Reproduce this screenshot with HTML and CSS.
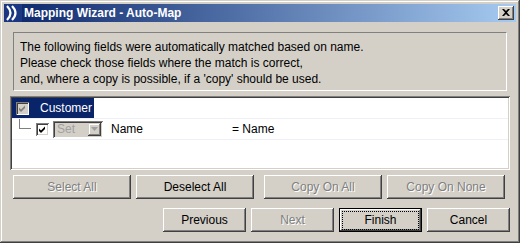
FILE: index.html
```html
<!DOCTYPE html>
<html lang="en">
<head>
    <meta charset="UTF-8">
    <meta name="viewport" content="width=device-width, initial-scale=1.0">
    <title>Mapping Wizard - Auto-Map</title>
    <link rel="stylesheet" href="styles.css">
</head>
<body>
    <div class="window">
        <div class="titlebar">
            <svg class="app-icon" width="18" height="18" viewBox="0 0 18 18">
                <rect width="18" height="18" fill="#1b3782"/>
                <path d="M3 2 Q10 9 3 16" stroke="#fff" stroke-width="2.2" fill="none"/>
                <path d="M8 2 Q15 9 8 16" stroke="#fff" stroke-width="2.2" fill="none"/>
            </svg>
            <span class="title">Mapping Wizard - Auto-Map</span>
            <div class="close-btn">
                <svg width="8" height="7" viewBox="0 0 8 7">
                    <path d="M0 0h2l2 2 2-2h2L5 3.5 8 7H6L4 5 2 7H0l3-3.5z" fill="#000"/>
                </svg>
            </div>
        </div>

        <div class="intro">
            The following fields were automatically matched based on name.<br>
            Please check those fields where the match is correct,<br>
            and, where a copy is possible, if a 'copy' should be used.
        </div>

        <div class="tree">
            <div class="row">
                <div class="node selected">
                    <span class="check disabled">
                        <svg width="9" height="9" viewBox="0 0 9 9"><path d="M1 3.5l2 2 4-4v2.5l-4 4-2-2z" fill="#808080"/></svg>
                    </span>
                    <span class="node-text">Customer</span>
                </div>
            </div>
            <div class="row">
                <span class="connector"></span>
                <span class="check">
                    <svg width="9" height="9" viewBox="0 0 9 9"><path d="M1 3.5l2 2 4-4v2.5l-4 4-2-2z" fill="#000"/></svg>
                </span>
                <div class="combo">
                    <span class="combo-text">Set</span>
                    <span class="combo-arrow">
                        <svg width="7" height="4" viewBox="0 0 7 4"><path d="M0 0h7L3.5 4z" fill="#a0a0a0"/></svg>
                    </span>
                </div>
                <span class="field-name">Name</span>
                <span class="field-match">= Name</span>
            </div>
        </div>

        <div class="actions">
            <button class="btn wide" disabled>Select All</button>
            <button class="btn wide">Deselect All</button>
            <button class="btn wide spaced" disabled>Copy On All</button>
            <button class="btn wide" disabled>Copy On None</button>
        </div>

        <div class="nav">
            <button class="btn">Previous</button>
            <button class="btn" disabled>Next</button>
            <button class="btn default"><span class="focus">Finish</span></button>
            <button class="btn">Cancel</button>
        </div>
    </div>
</body>
</html>
```

FILE: styles.css
```css
body {
    margin: 0;
    font-family: "Liberation Sans", Arial, sans-serif;
    font-size: 12px;
    color: #000;
}
.window {
    width: 520px;
    height: 243px;
    box-sizing: border-box;
    padding: 4px;
    background: #d4d0c8;
    box-shadow: inset -1px -1px #404040, inset 1px 1px #d4d0c8,
                inset -2px -2px #808080, inset 2px 2px #fff;
    display: flex;
    flex-direction: column;
}
.titlebar {
    height: 18px;
    display: flex;
    align-items: center;
    background: linear-gradient(to right, #0a246a, #a6caf0);
    color: #fff;
    font-weight: bold;
}
.app-icon {
    display: block;
}
.title {
    margin-left: 2px;
    line-height: 18px;
}
.close-btn {
    margin-left: auto;
    margin-right: 2px;
    width: 16px;
    height: 14px;
    box-sizing: border-box;
    background: #d4d0c8;
    box-shadow: inset -1px -1px #404040, inset 1px 1px #fff,
                inset -2px -2px #808080;
    display: flex;
    align-items: center;
    justify-content: center;
}
.close-btn svg {
    display: block;
    margin: 0 1px 1px 0;
}
.intro {
    margin: 10px 9px 0;
    padding: 6px 6px 3px;
    border: 1px solid;
    border-color: #808080 #fff #fff #808080;
    line-height: 16px;
}
.tree {
    margin: 5px 6px 0;
    height: 74px;
    box-sizing: border-box;
    padding: 2px;
    background: #fff;
    box-shadow: inset 1px 1px #808080, inset -1px -1px #fff,
                inset 2px 2px #404040, inset -2px -2px #d4d0c8;
}
.row {
    height: 20px;
    border-bottom: 1px solid #efeff8;
    display: flex;
    align-items: center;
}
.node {
    height: 20px;
    display: flex;
    align-items: center;
    padding: 0 2px 0 4px;
}
.selected {
    background: #0a246a;
    color: #fff;
}
.node-text {
    margin-left: 11px;
}
.check {
    width: 13px;
    height: 13px;
    box-sizing: border-box;
    background: #fff;
    box-shadow: inset 1px 1px #808080, inset -1px -1px #fff,
                inset 2px 2px #404040, inset -2px -2px #d4d0c8;
    display: flex;
    align-items: center;
    justify-content: center;
}
.check.disabled {
    background: #d4d0c8;
}
.check svg {
    display: block;
}
.connector {
    align-self: flex-start;
    margin-left: 7px;
    width: 12px;
    height: 10px;
    box-sizing: border-box;
    border-left: 1px solid #808080;
    border-bottom: 1px solid #808080;
}
.row .check {
    margin-left: 5px;
}
.row .node .check {
    margin-left: 0;
}
.combo {
    margin-left: 4px;
    width: 50px;
    height: 17px;
    box-sizing: border-box;
    padding: 2px;
    background: #d4d0c8;
    box-shadow: inset 1px 1px #808080, inset -1px -1px #fff,
                inset 2px 2px #404040, inset -2px -2px #d4d0c8;
    display: flex;
    align-items: center;
}
.combo-text {
    flex: 1;
    padding-left: 2px;
    color: #a0a0a0;
}
.combo-arrow {
    width: 13px;
    height: 13px;
    box-sizing: border-box;
    box-shadow: inset -1px -1px #404040, inset 1px 1px #d4d0c8,
                inset -2px -2px #808080, inset 2px 2px #fff;
    display: flex;
    align-items: center;
    justify-content: center;
}
.combo-arrow svg {
    display: block;
}
.field-name {
    margin-left: 8px;
    width: 121px;
}
.actions {
    display: flex;
    gap: 5px;
    margin: 5px 0 0 9px;
}
.nav {
    display: flex;
    justify-content: flex-end;
    gap: 5px;
    margin: 9px 6px 0;
}
.btn {
    width: 83px;
    height: 24px;
    padding: 0;
    border: none;
    background: #d4d0c8;
    font-family: inherit;
    font-size: 12px;
    color: #000;
    box-shadow: inset -1px -1px #404040, inset 1px 1px #fff,
                inset -2px -2px #808080, inset 2px 2px #d4d0c8;
}
.btn.wide {
    width: 118px;
}
.btn.spaced {
    margin-left: 5px;
}
.btn:disabled {
    color: #808080;
    text-shadow: 1px 1px #fff;
}
.btn.default {
    box-shadow: inset 0 0 0 1px #000, inset -2px -2px #404040,
                inset 2px 2px #fff, inset -3px -3px #808080;
}
.focus {
    display: block;
    margin: 0 4px;
    line-height: 17px;
    outline: 1px dotted #000;
}
```
